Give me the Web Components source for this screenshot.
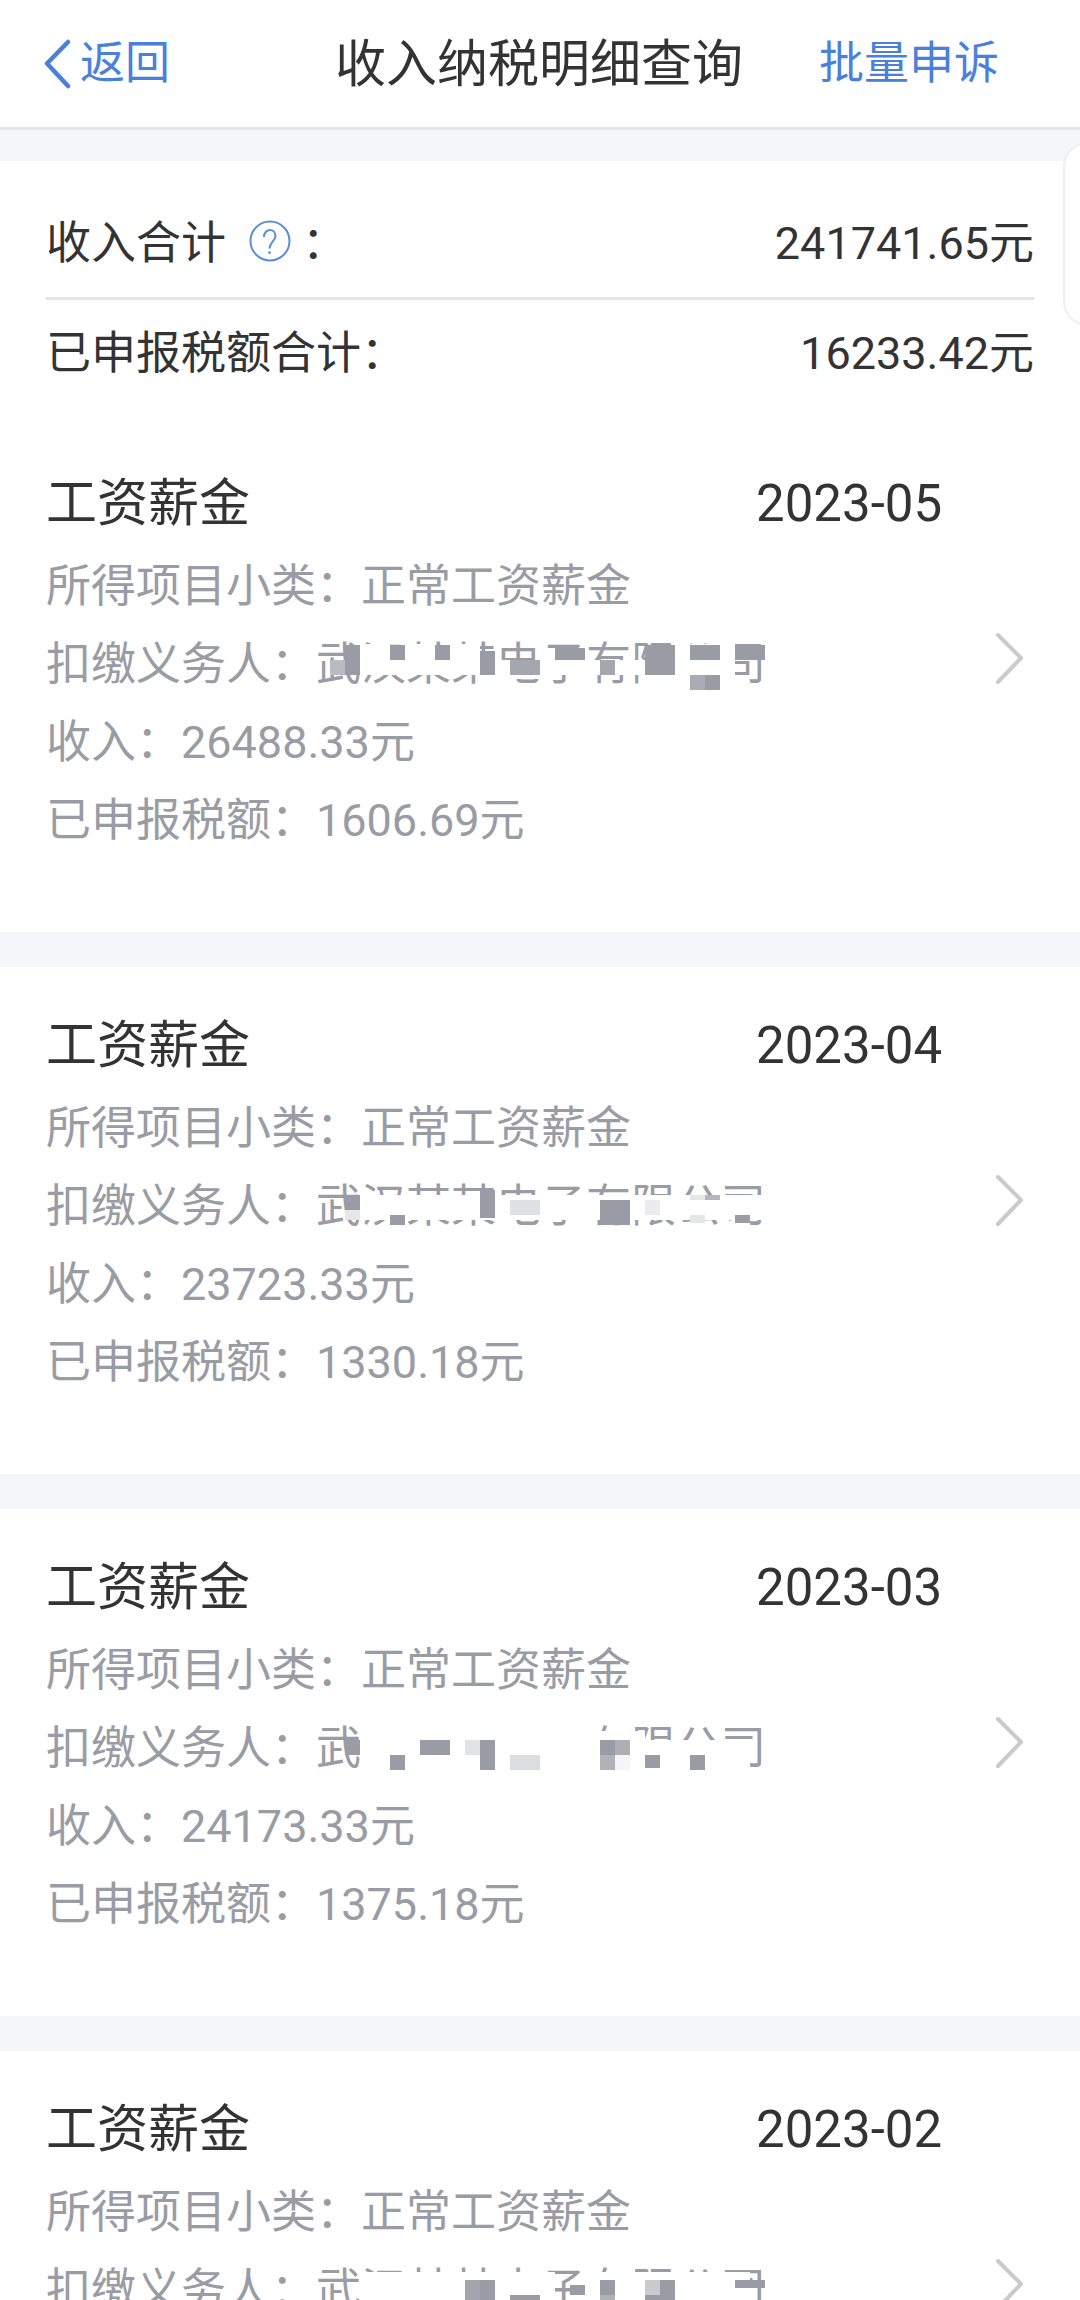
<!DOCTYPE html>
<html lang="zh">
<head>
<meta charset="utf-8">
<style>
  html, body { margin: 0; padding: 0; height: 2300px; overflow: hidden; background: #fff; }
  body { font-family: Roboto, "Noto Sans CJK SC", sans-serif; color: #333; }
</style>
</head>
<body>
<tax-page>
  <top-bar title="收入纳税明细查询" back="返回" action="批量申诉"></top-bar>
  <summary-card income="241741.65元" tax="16233.42元"></summary-card>
  <income-item date="2023-05" income="26488.33元" tax="1606.69元" mosaic="a"></income-item>
  <income-item date="2023-04" income="23723.33元" tax="1330.18元" mosaic="b"></income-item>
  <income-item date="2023-03" income="24173.33元" tax="1375.18元" mosaic="c"></income-item>
  <income-item date="2023-02" mosaic="d"></income-item>
</tax-page>

<script>
const W = '#fff', G = '#9a9ca5'

// cells of the blur over the payer name: [col, y from line centre, cols, height, colour]
const MOSAICS = {
  a: [
    [4,-19,2,31,W],[6,-3,7,15,W],[7,-19,2,16,W],[10,-19,2,16,W],[13,-3,1,15,W],[16,-3,4,15,W],
    [21,-3,2,15,W],[25,-19,4,31,W],[23,12,6,16,W],[12,12,1,12,W],[14,12,2,4,W],
    [2,-3,1,15,'#b9bbc2'],[3,-18,1,30,G],[6,-18,1,15,G],[9,-18,1,15,G],[12,-12,1,24,G],
    [14,-3,2,15,'#a5a7ae'],[17,-15,2,12,G],[20,-3,1,15,'#a5a7ae'],[23,-18,2,30,G],
    [26,-18,2,15,G],[26,12,1,15,'#aaacb3'],[27,12,1,15,G],[29,-18,2,15,G]
  ],
  b: [
    [4,-10,27,25,W],
    [3,-10,1,15,G],[3,5,1,10,'#e5e6e8'],[6,10,1,10,G],[12,-15,1,28,G],[14,-5,2,15,'#e0e1e3'],
    [20,-5,2,15,G],[20,10,2,10,G],[23,-5,1,15,'#ebecee'],[26,-10,1,5,'#e5e6e8'],[27,-10,1,5,'#b5b6bc'],
    [26,10,1,8,'#e5e6e8'],[29,10,1,8,G]
  ],
  c: [
    [4,-26,15,52,W],[19,-16,4,42,W],[23,-7,7,33,W],
    [3,-7,1,15,G],[6,8,1,15,G],[8,-7,2,15,G],[11,-7,1,15,'#e2e3e5'],[12,-7,1,30,G],
    [14,8,2,15,'#dcdde0'],[20,-7,1,15,G],[21,-7,1,15,'#adafb5'],[20,8,1,15,'#b1b2b8'],
    [21,8,1,15,'#f5f5f7'],[23,8,1,13,G],[26,8,1,15,G]
  ],
  d: [
    [4,-17,13,33,W],[19,-17,11,33,W],
    [11,-9,1,20,'#a3a5ac'],[12,-9,1,20,G],[14,6,2,6,G],[18,-4,1,10,G],
    [20,-9,1,15,G],[20,6,1,6,'#b1b2b8'],[23,-9,1,15,'#c9cacf'],[24,-9,1,15,G],[23,6,2,6,G],[29,-9,2,8,G]
  ]
}

const pageTpl = document.createElement('template')
pageTpl.innerHTML = `
  <style>
    :host { display: block; position: relative; width: 1080px; height: 2300px; overflow: hidden; }
    .tab {
      position: absolute; left: 1063px; top: 142px; width: 50px; height: 184px;
      box-sizing: border-box; border: 2px solid #eeeff1; border-radius: 30px; background: #fff;
    }
  </style>
  <slot></slot>
  <div class="tab"></div>
`
class TaxPage extends HTMLElement {
  constructor() {
    super()
    this.attachShadow({mode: 'open'})
    this.shadowRoot.appendChild(pageTpl.content.cloneNode(true))
  }
}
customElements.define('tax-page', TaxPage)

class TopBar extends HTMLElement {
  constructor() {
    super()
    this.attachShadow({mode: 'open'})
    this.shadowRoot.innerHTML = `
      <style>
        :host {
          display: flex; align-items: center; height: 119px; padding-bottom: 8px;
          border-bottom: 3px solid #e4e4e6; background: #fff;
          font-size: 45px;
        }
        .back { display: flex; align-items: center; color: #4a80dc; margin-left: 40px; width: 295px; }
        .back svg { display: block; margin-right: 6px; margin-top: 8px; }
        .title { font-size: 51px; color: #333; width: 484px; }
        .action { color: #4a80dc; }
      </style>
      <div class="back">
        <svg width="34" height="50" viewBox="0 0 34 50" fill="none"><path d="M28 3 L7 24.500 L28 47" stroke="#4a80dc" stroke-width="4.500" stroke-linecap="round" stroke-linejoin="round"/></svg>
        <span>${this.getAttribute('back')}</span>
      </div>
      <div class="title">${this.getAttribute('title')}</div>
      <div class="action">${this.getAttribute('action')}</div>
    `
  }
}
customElements.define('top-bar', TopBar)

class SummaryCard extends HTMLElement {
  constructor() {
    super()
    this.attachShadow({mode: 'open'})
    this.shadowRoot.innerHTML = `
      <style>
        :host {
          display: block; background: #fff; border-top: 31px solid #f5f6fa;
          padding: 0 46px; height: 264px; font-size: 45px; color: #333;
        }
        .row { display: flex; justify-content: space-between; align-items: center; height: 98px; }
        .row.first { height: 136px; padding-top: 20px; box-sizing: border-box; }
        .label { display: flex; align-items: center; }
        .label svg { margin: 4px 11px 0 23px; display: block; }
        hr { border: 0; height: 3px; background: #e4e4e6; margin: 0; }
      </style>
      <div class="row first">
        <div class="label">
          <span>收入合计</span>
          <svg width="42" height="42" viewBox="0 0 42 42" fill="none">
            <circle cx="21" cy="21" r="19.500" stroke="#5a8fd8" stroke-width="2"/>
            <path d="M15 17 C15 12.500 18 10 21 10 C24.500 10 26.500 13 26.500 16 C26.500 20.500 21 22 20.500 28.500" stroke="#5a8fd8" stroke-width="2"/>
            <circle cx="20.500" cy="32.700" r="1.400" fill="#5a8fd8"/>
          </svg>
          <span>：</span>
        </div>
        <div>${this.getAttribute('income')}</div>
      </div>
      <hr>
      <div class="row">
        <div>已申报税额合计：</div>
        <div>${this.getAttribute('tax')}</div>
      </div>
    `
  }
}
customElements.define('summary-card', SummaryCard)

class MosaicName extends HTMLElement {
  constructor() {
    super()
    this.attachShadow({mode: 'open'})
    const cells = (MOSAICS[this.getAttribute('cells')] || []).map(([c, y, w, h, color]) =>
      `<i style="left:${15 * c - 16}px;top:${37 + y}px;width:${15 * w}px;height:${h}px;background:${color}"></i>`
    ).join('')
    this.shadowRoot.innerHTML = `
      <style>
        :host { display: inline-block; position: relative; }
        i { position: absolute; display: block; }
      </style>
      <slot></slot>${cells}
    `
  }
}
customElements.define('mosaic-name', MosaicName)

class IncomeItem extends HTMLElement {
  constructor() {
    super()
    this.attachShadow({mode: 'open'})
    const income = this.getAttribute('income')
    const tax = this.getAttribute('tax')
    // the last item runs off the screen, so its last lines are left out
    const amounts = income ? `
      <div class="line">收入：${income}</div>
      <div class="line">已申报税额：${tax}</div>` : ''
    this.shadowRoot.innerHTML = `
      <style>
        :host {
          display: block; position: relative; background: #fff; height: 467px;
          padding: 40px 0 0 46px;
          border-bottom: 35px solid #f5f6fa;
        }
        .head { display: flex; font-size: 51px; line-height: 78px; color: #333; margin-bottom: 5px; }
        .head .name { width: 710px; }
        .line { font-size: 45px; line-height: 78px; color: #9a9ca5; height: 78px; white-space: nowrap; }
        svg { position: absolute; left: 994px; top: 207px; }
      </style>
      <div class="head"><div class="name">工资薪金</div><div>${this.getAttribute('date')}</div></div>
      <div class="line">所得项目小类：正常工资薪金</div>
      <div class="line">扣缴义务人：<mosaic-name cells="${this.getAttribute('mosaic')}">武汉某某电子有限公司</mosaic-name></div>
      ${amounts}
      <svg width="32" height="54" viewBox="0 0 32 54" fill="none"><path d="M4 3 L27 26 L4 50" stroke="#c9cacd" stroke-width="4" stroke-linecap="round" stroke-linejoin="round"/></svg>
    `
  }
}
customElements.define('income-item', IncomeItem)
</script>
</body>
</html>
